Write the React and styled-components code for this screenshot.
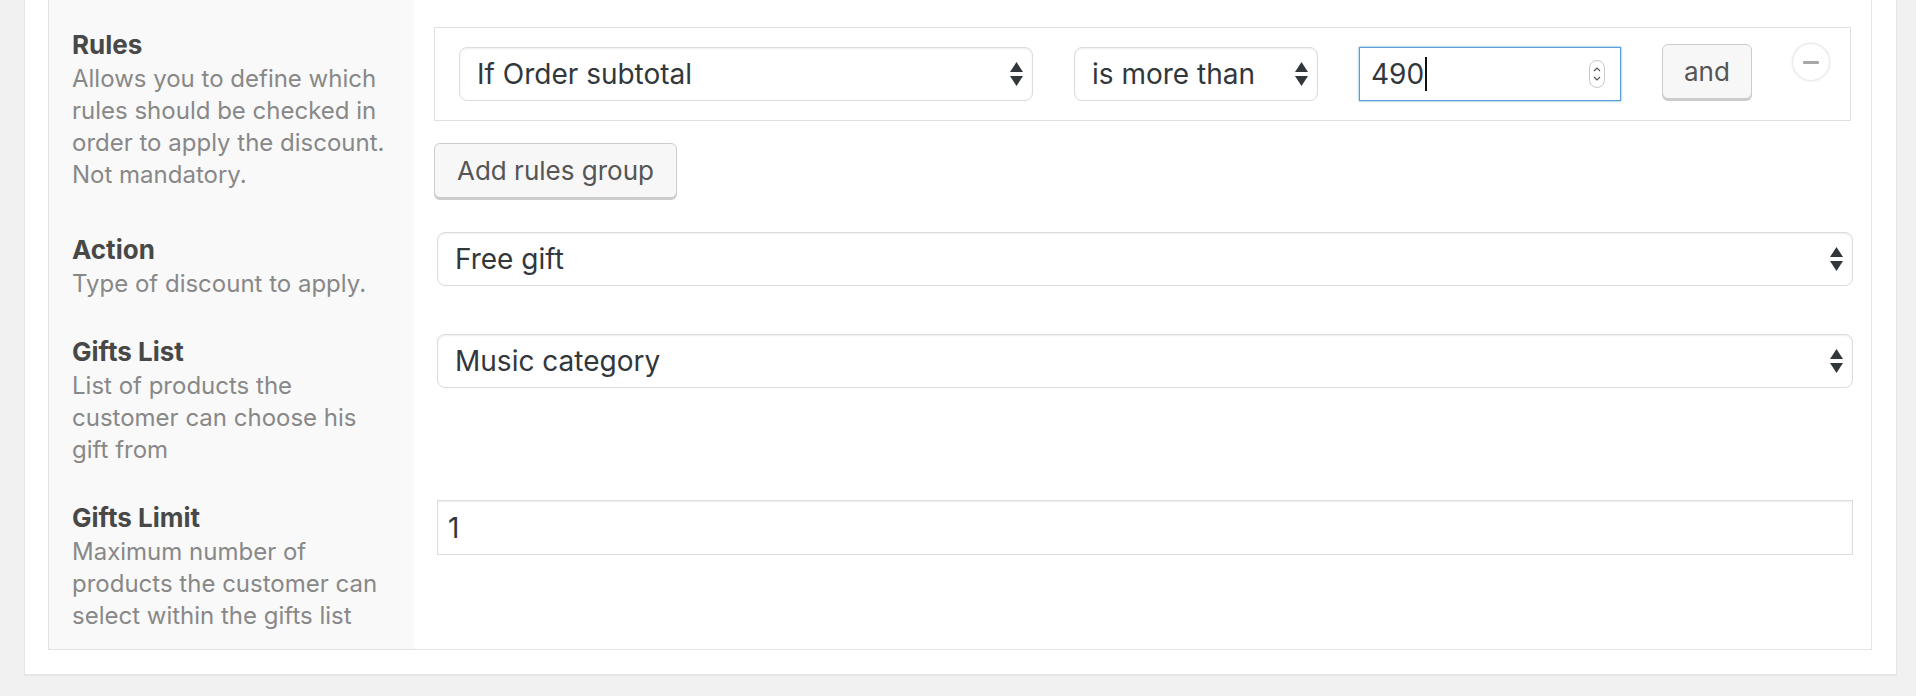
import React from 'react';
import styled, { createGlobalStyle } from 'styled-components';

const GlobalStyle = createGlobalStyle`
  html, body { margin: 0; padding: 0; background: #f1f1f1; }
  body {
    font-family: Inter, "Noto Sans", "Liberation Sans", sans-serif;
    -webkit-font-smoothing: antialiased;
  }
  * { box-sizing: border-box; }
`;

const Page = styled.div`
  padding: 0 19px 22px 24px;
`;

const Panel = styled.div`
  background: #fff;
  border: 1px solid #e5e5e5;
  border-top: none;
  box-shadow: 0 1px 1px rgba(0, 0, 0, 0.04);
  padding: 0 24px 24px 23px;
`;

const FormBox = styled.div`
  border: 1px solid #e3e3e3;
  border-top: none;
  display: flex;
  flex-direction: column;
`;

const FormRow = styled.div`
  display: grid;
  grid-template-columns: 365px 1fr;
`;

const Th = styled.div`
  background: #f9f9f9;
  padding: ${(p) => (p.$first ? 29 : 19)}px 22px 17px 23px;
`;

const Title = styled.div`
  font-size: 26px;
  font-weight: 700;
  line-height: 32px;
  color: #484848;
`;

const Desc = styled.div`
  margin-top: 2px;
  font-size: 24px;
  line-height: 32px;
  color: #888;
`;

const Td = styled.div`
  padding: ${(p) => (p.$first ? 27 : 17)}px 18px 17px 20px;
  display: flex;
  flex-direction: column;
  align-items: flex-start;
`;

const RulesBox = styled.div`
  align-self: stretch;
  margin-right: 2px;
  border: 1px solid #e1e1e1;
  padding: 16px 0 19px 24px;
  display: flex;
  align-items: flex-start;
  gap: 41px;
`;

const SelectWrap = styled.div`
  position: relative;
  flex: none;
  width: ${(p) => p.$w || 'auto'};
  margin-top: ${(p) => p.$mt || 0}px;
  ${(p) => p.$full && 'align-self: stretch; margin-left: 3px;'}
`;

const Select = styled.select`
  appearance: none;
  -webkit-appearance: none;
  display: block;
  width: 100%;
  height: 54px;
  margin: 0;
  padding: 0 44px 0 17px;
  border: 1px solid #dcdcdc;
  border-radius: 8px;
  background: #fff;
  box-shadow: inset 0 1px 2px rgba(0, 0, 0, 0.07);
  font-family: inherit;
  font-size: 28px;
  color: #32373c;
  outline: none;
`;

const Arrows = styled.svg`
  position: absolute;
  right: 10px;
  top: 50%;
  transform: translateY(-50%);
  pointer-events: none;
`;

const NumberBox = styled.div`
  flex: none;
  width: 262px;
  height: 54px;
  margin-top: 3px;
  border: 1px solid #5b9dd9;
  box-shadow: 0 0 2px rgba(30, 140, 190, 0.8);
  background: #fff;
  padding: 0 15px 0 11px;
  display: flex;
  align-items: center;
  font-size: 28px;
  color: #32373c;
`;

const Caret = styled.span`
  display: inline-block;
  width: 2px;
  height: 34px;
  background: #111;
  margin-left: 1px;
`;

const Spinner = styled.svg`
  margin-left: auto;
  flex: none;
`;

const Button = styled.button`
  flex: none;
  height: 55px;
  margin: ${(p) => p.$mt || 0}px 0 0;
  padding: 0 ${(p) => p.$px || 22}px;
  border: 1px solid #cccccc;
  border-radius: 6px;
  background: #f7f7f7;
  box-shadow: 0 2px 0 #cccccc;
  font-family: inherit;
  font-size: 26px;
  color: #555;
  cursor: pointer;
`;

const RemoveButton = styled.span`
  flex: none;
  width: 36px;
  height: 36px;
  border-radius: 50%;
  background: #fff;
  box-shadow: 0 0 3px rgba(0, 0, 0, 0.25);
  display: flex;
  align-items: center;
  justify-content: center;
  &::before {
    content: '';
    width: 16px;
    height: 3px;
    border-radius: 1px;
    background: #a8a8a8;
  }
`;

const TextInput = styled.input`
  align-self: stretch;
  margin-left: 3px;
  height: 55px;
  padding: 0 10px;
  border: 1px solid #dcdcdc;
  box-shadow: inset 0 1px 2px rgba(0, 0, 0, 0.07);
  background: #fff;
  font-family: inherit;
  font-size: 28px;
  color: #32373c;
  outline: none;
`;

const ArrowIcon = () => (
  <Arrows width="13" height="24" viewBox="0 0 13 24">
    <polygon points="0,10 6.5,0 13,10" fill="#32373c" />
    <polygon points="0,14 13,14 6.5,24" fill="#32373c" />
  </Arrows>
);

const SelectField = ({ value, ...rest }) => (
  <SelectWrap {...rest}>
    <Select defaultValue={value}>
      <option value={value}>{value}</option>
    </Select>
    <ArrowIcon />
  </SelectWrap>
);

const Label = ({ title, children }) => (
  <>
    <Title>{title}</Title>
    <Desc>{children}</Desc>
  </>
);

export default function App() {
  return (
    <>
      <GlobalStyle />
      <Page>
        <Panel>
          <FormBox>
            <FormRow>
              <Th $first>
                <Label title="Rules">
                  Allows you to define which rules should be checked in order to apply the discount. Not mandatory.
                </Label>
              </Th>
              <Td $first>
                <RulesBox>
                  <SelectField value="If Order subtotal" $w="574px" $mt={3} />
                  <SelectField value="is more than" $w="244px" $mt={3} />
                  <NumberBox>
                    490
                    <Caret />
                    <Spinner width="16" height="28" viewBox="0 0 16 28">
                      <rect x="0.5" y="0.5" width="15" height="27" rx="7.5" fill="#fff" stroke="#c8c8c8" />
                      <polyline points="5,11 8,8 11,11" fill="none" stroke="#555" strokeWidth="1.2" />
                      <polyline points="5,17 8,20 11,17" fill="none" stroke="#555" strokeWidth="1.2" />
                    </Spinner>
                  </NumberBox>
                  <Button $px={21}>and</Button>
                  <RemoveButton aria-label="Remove rule" />
                </RulesBox>
                <Button $mt={22} $px={22}>Add rules group</Button>
              </Td>
            </FormRow>

            <FormRow>
              <Th>
                <Label title="Action">Type of discount to apply.</Label>
              </Th>
              <Td>
                <SelectField value="Free gift" $full />
              </Td>
            </FormRow>

            <FormRow>
              <Th>
                <Label title="Gifts List">List of products the customer can choose his gift from</Label>
              </Th>
              <Td>
                <SelectField value="Music category" $full />
              </Td>
            </FormRow>

            <FormRow>
              <Th>
                <Label title="Gifts Limit">
                  Maximum number of products the customer can select within the gifts list
                </Label>
              </Th>
              <Td>
                <TextInput type="text" defaultValue="1" readOnly />
              </Td>
            </FormRow>
          </FormBox>
        </Panel>
      </Page>
    </>
  );
}
